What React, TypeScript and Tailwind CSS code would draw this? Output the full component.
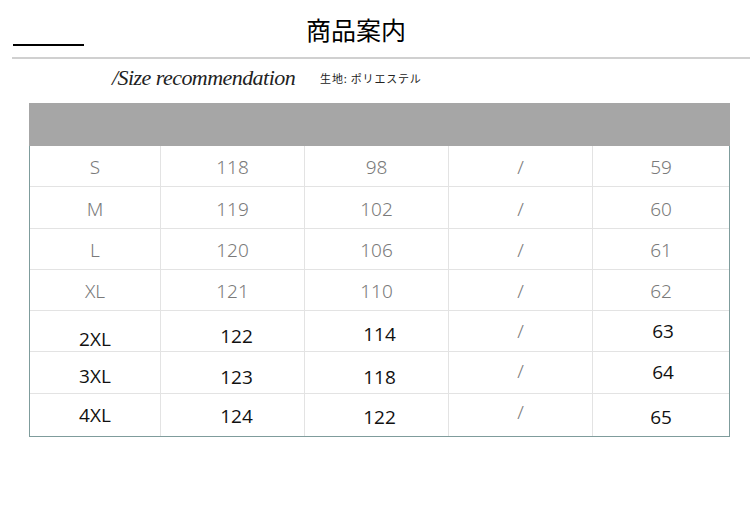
import React from "react";

type Cell = { t: string; dy?: number; dx?: number };

const topRows: string[][] = [
  ["S", "118", "98", "/", "59"],
  ["M", "119", "102", "/", "60"],
  ["L", "120", "106", "/", "61"],
  ["XL", "121", "110", "/", "62"],
];

const bottomRows: Cell[][] = [
  [{ t: "2XL", dy: 8 }, { t: "122", dy: 5, dx: 4 }, { t: "114", dy: 3, dx: 3 }, { t: "/", dy: 0 }, { t: "63", dy: 0, dx: 2 }],
  [{ t: "3XL", dy: 4 }, { t: "123", dy: 5, dx: 4 }, { t: "118", dy: 5, dx: 3 }, { t: "/", dy: -1 }, { t: "64", dy: 0, dx: 2 }],
  [{ t: "4XL", dy: 0 }, { t: "124", dy: 1, dx: 4 }, { t: "122", dy: 2, dx: 3 }, { t: "/", dy: -3 }, { t: "65", dy: 2, dx: 0 }],
];

const colW = ["w-[131px]", "w-[144px]", "w-[144px]", "w-[144px]", "w-[136px]"];
const topH = ["h-[41px]", "h-[42px]", "h-[41px]", "h-[41px]"];
const botH = ["h-[41px]", "h-[42px]", "h-[42px]"];

export default function App() {
  return (
    <div className="w-[750px] h-[507px] bg-white overflow-hidden" style={{ fontFamily: "'Noto Sans', 'Noto Sans CJK JP', sans-serif" }}>
      <div className="h-[44px] pt-[14px] pl-[306px] text-[25px] leading-[30px] text-black" style={{ fontFamily: "'Noto Sans CJK JP', sans-serif" }}>
        商品案内
      </div>
      <div className="ml-[13px] w-[71px] h-[2px] bg-black" />
      <div className="mt-[11px] ml-[12px] w-[738px] h-[2px] bg-[#d0d0d0]" />
      <div className="h-[44px] flex items-center pl-[112px] pb-[8px]">
        <span className="italic text-[22px] text-[#222] tracking-[-0.55px]" style={{ fontFamily: "'Liberation Serif', serif" }}>
          /Size recommendation
        </span>
        <span className="ml-[25px] text-[11px] text-[#222] pt-[3px] tracking-[0.8px]" style={{ fontFamily: "'Noto Sans CJK JP', sans-serif" }}>
          生地: ポリエステル
        </span>
      </div>
      <div className="ml-[29px] w-[701px]">
        <div className="h-[43px] bg-[#a6a6a6]" />
        <div className="border-l border-r border-b border-[#7f9c9c]">
          {topRows.map((row, ri) => (
            <div key={ri} className={`flex ${topH[ri]} border-b border-[#e3e3e3]`}>
              {row.map((c, ci) => (
                <div
                  key={ci}
                  className={`${colW[ci]} flex items-center justify-center pt-[3px] text-[19px] font-light text-[#7a7a7a] ${ci < 4 ? "border-r border-[#e3e3e3]" : ""}`}
                >
                  {c}
                </div>
              ))}
            </div>
          ))}
          {bottomRows.map((row, ri) => (
            <div key={ri} className={`flex ${botH[ri]} ${ri < 2 ? "border-b border-[#e3e3e3]" : ""}`}>
              {row.map((c, ci) => (
                <div
                  key={ci}
                  className={`${colW[ci]} flex items-center justify-center ${ci < 4 ? "border-r border-[#e3e3e3]" : ""}`}
                >
                  <span
                    className={c.t === "/" ? "text-[19px] font-light text-[#7a7a7a]" : "text-[19px] text-[#111]"}
                    style={{
                      transform: `translate(${c.dx ?? 0}px, ${c.dy ?? 0}px)`,
                      fontFamily: c.t === "/" ? "'Noto Sans', sans-serif" : "'Open Sans', sans-serif",
                    }}
                  >
                    {c.t}
                  </span>
                </div>
              ))}
            </div>
          ))}
        </div>
      </div>
    </div>
  );
}
